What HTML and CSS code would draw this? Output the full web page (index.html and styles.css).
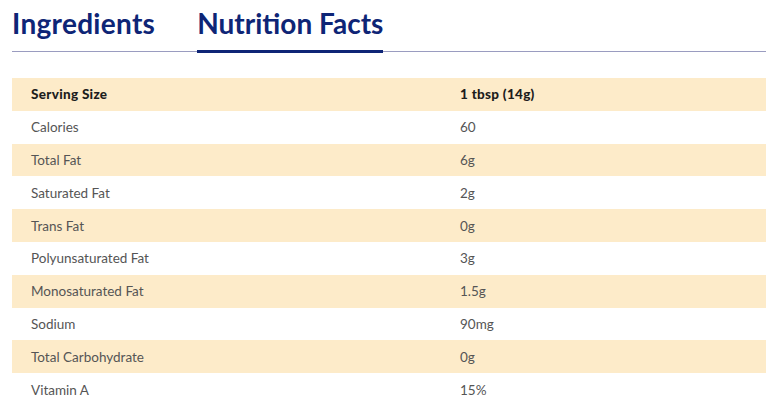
FILE: index.html
```html
<!DOCTYPE html>
<html lang="en">
<head>
<meta charset="utf-8">
<title>Nutrition Facts</title>
<link rel="stylesheet" href="styles.css">
</head>
<body>
<div class="page">
  <nav class="tabs">
    <a class="tab">Ingredients</a>
    <a class="tab active">Nutrition Facts</a>
  </nav>
  <table class="facts">
    <tr class="head"><td>Serving Size</td><td>1 tbsp (14g)</td></tr>
    <tr><td>Calories</td><td>60</td></tr>
    <tr><td>Total Fat</td><td>6g</td></tr>
    <tr><td>Saturated Fat</td><td>2g</td></tr>
    <tr><td>Trans Fat</td><td>0g</td></tr>
    <tr><td>Polyunsaturated Fat</td><td>3g</td></tr>
    <tr><td>Monosaturated Fat</td><td>1.5g</td></tr>
    <tr><td>Sodium</td><td>90mg</td></tr>
    <tr><td>Total Carbohydrate</td><td>0g</td></tr>
    <tr><td>Vitamin A</td><td>15%</td></tr>
  </table>
</div>
</body>
</html>
```
FILE: styles.css
```css
* { box-sizing: border-box; }
html, body { margin: 0; padding: 0; background: #fff; }
body { font-family: Lato, "Open Sans", sans-serif; }
.page { padding: 0 10px 0 12px; }
.tabs {
  display: flex;
  gap: 42px;
  border-bottom: 1.5px solid #9a9cc0;
  height: 52px;
  align-items: flex-end;
}
.tab {
  font-size: 28px;
  font-weight: 700;
  color: #0e2576;
  line-height: 32px;
  padding: 6px 0 11px;
  border-bottom: 3px solid transparent;
  margin-bottom: -1.5px;
  letter-spacing: 0.3px;
}
.tab.active { border-bottom-color: #0e2576; letter-spacing: 0; }
.facts {
  width: 100%;
  margin-top: 26px;
  border-collapse: collapse;
  font-size: 13.5px;
  color: #555;
}
.facts td { height: 32.8px; padding: 0 0 0 19px; }
.facts td:first-child { width: 429px; }
.facts tr:nth-child(odd) { background: #fdebc9; }
.facts tr.head td { font-weight: 900; color: #1d1d1d; letter-spacing: 0.3px; }
```
